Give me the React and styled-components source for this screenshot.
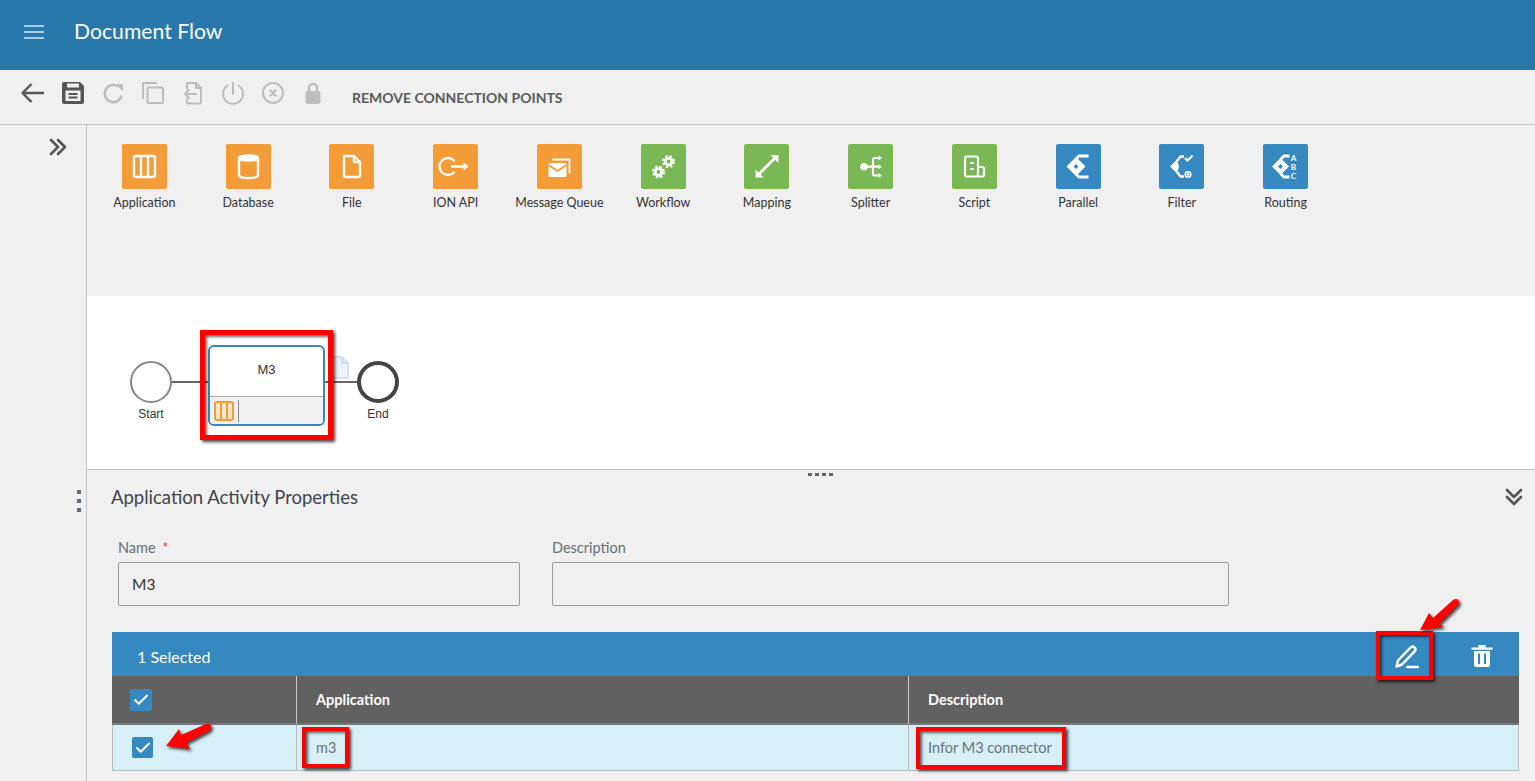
import React from 'react';
import styled, { createGlobalStyle } from 'styled-components';
import { Check } from 'lucide-react';

const GlobalStyle = createGlobalStyle`
  html, body { margin: 0; padding: 0; background: #f0f0f0; }
  body { font-family: Lato, "Noto Sans", sans-serif; color: #444; }
  * { box-sizing: border-box; }
`;

const Shell = styled.div`
  position: relative;
  display: flex;
  flex-direction: column;
  width: 1535px;
  height: 781px;
  overflow: hidden;
  background: #f0f0f0;
`;

const Header = styled.header`
  display: flex;
  align-items: center;
  gap: 28px;
  height: 70px;
  padding: 0 0 8px 23px;
  background: #2878ab;
`;

const MenuIcon = styled.svg`
  width: 23px;
  height: 16px;
  margin-top: 2px;
`;

const Title = styled.h1`
  margin: 0;
  font-size: 21.2px;
  font-weight: 400;
  color: #fff;
`;

const Toolbar = styled.div`
  display: flex;
  align-items: center;
  height: 55px;
  padding-left: 13px;
  border-bottom: 1px solid #c4c4c4;
`;

const ToolButton = styled.span`
  display: flex;
  align-items: center;
  justify-content: center;
  width: 40px;
  height: 40px;
  margin-top: -8px;
  color: ${(p) => (p.$off ? '#bdbdbd' : '#555')};
`;

const ToolText = styled.span`
  margin-left: 19px;
  font-size: 14px;
  font-weight: 700;
  color: #5a5a5a;
`;

const Body = styled.div`
  display: flex;
  flex: 1;
  min-height: 0;
`;

const SideRail = styled.aside`
  display: flex;
  flex-direction: column;
  flex: none;
  width: 87px;
  border-right: 1px solid #c4c4c4;
`;

const RailChevron = styled.svg`
  width: 20px;
  height: 18px;
  margin: 13px 0 0 48px;
`;

const RailDots = styled.div`
  display: flex;
  flex-direction: column;
  gap: 5px;
  margin: 334px 0 0 77px;

  span {
    width: 4px;
    height: 4px;
    background: #5f6b75;
  }
`;

const Main = styled.main`
  display: flex;
  flex-direction: column;
  flex: 1;
  min-width: 0;
`;

const Palette = styled.div`
  display: grid;
  grid-template-columns: repeat(12, 103.75px);
  align-content: start;
  height: 171px;
  padding: 19px 0 0 5.5px;
`;

const PaletteItem = styled.div`
  display: flex;
  flex-direction: column;
  align-items: center;
`;

const PaletteTile = styled.div`
  width: 45px;
  height: 45px;
  border-radius: 2px;
  background: ${(p) => p.$color};

  svg {
    display: block;
    width: 45px;
    height: 45px;
  }
`;

const PaletteLabel = styled.span`
  margin-top: 6px;
  font-size: 12.5px;
  line-height: 16px;
  color: #333;
  white-space: nowrap;
`;

const Canvas = styled.div`
  position: relative;
  flex: none;
  height: 174px;
  background: #fff;
  border-bottom: 1px solid #c0c0c0;
  font-family: "Liberation Sans", Arial, sans-serif;
`;

const Wire = styled.div`
  position: absolute;
  left: 85px;
  top: 85px;
  width: 186px;
  height: 2px;
  background: #666;
`;

const EventCircle = styled.div`
  position: absolute;
  left: ${(p) => p.$x}px;
  top: 65px;
  width: 42px;
  height: 42px;
  border-radius: 50%;
  background: #fff;
  border: ${(p) => (p.$end ? '4px solid #444' : '2px solid #888')};
`;

const EventLabel = styled.span`
  position: absolute;
  left: ${(p) => p.$x}px;
  top: 111px;
  width: 60px;
  text-align: center;
  font-size: 12px;
  line-height: 14px;
  color: #333;
`;

const TaskNode = styled.div`
  position: absolute;
  left: 121px;
  top: 49px;
  display: flex;
  flex-direction: column;
  width: 117px;
  height: 81px;
  border: 2px solid #3688c1;
  border-radius: 6px;
  background: #fff;
  overflow: hidden;
`;

const TaskName = styled.div`
  display: flex;
  align-items: center;
  justify-content: center;
  height: 49px;
  padding-bottom: 4px;
  font-size: 13px;
  color: #333;
`;

const TaskFoot = styled.div`
  display: flex;
  align-items: center;
  flex: 1;
  gap: 4px;
  padding-left: 4px;
  background: #f0f0f0;
  border-top: 1px solid #aaa;
`;

const TaskBadge = styled.span`
  display: flex;
  width: 20px;
  height: 20px;
  padding: 2px;
  gap: 2px;
  border-radius: 3px;
  background: #f39c38;

  i {
    flex: 1;
    background: #fbe6cc;
  }
`;

const TaskRule = styled.span`
  width: 1px;
  height: 22px;
  background: #888;
`;

const DocIcon = styled.svg`
  position: absolute;
  left: 243px;
  top: 60px;
  width: 19px;
  height: 23px;
`;

const Properties = styled.section`
  position: relative;
  flex: 1;
  padding: 15px 16px 0 25px;
`;

const GripDots = styled.div`
  position: absolute;
  left: 721px;
  top: 3px;
  display: flex;
  gap: 3px;

  span {
    width: 4px;
    height: 3px;
    background: #666;
  }
`;

const PropHead = styled.div`
  display: flex;
  align-items: center;
  justify-content: space-between;
  height: 24px;
  margin-left: -1px;
`;

const PropTitle = styled.h2`
  margin: 0;
  font-size: 18.5px;
  font-weight: 400;
  color: #3f444a;
`;

const CollapseIcon = styled.svg`
  width: 18px;
  height: 20px;
  margin-right: -4px;
`;

const FormRow = styled.div`
  display: flex;
  gap: 32px;
  margin: 29px 0 0 6px;
`;

const Field = styled.div`
  width: ${(p) => p.$w}px;
`;

const FieldLabel = styled.div`
  height: 24px;
  font-size: 14.5px;
  line-height: 19px;
  color: #666e75;

  em {
    font-style: normal;
    color: #e8404c;
    margin-left: 3px;
  }
`;

const FieldBox = styled.div`
  display: flex;
  align-items: center;
  height: 44px;
  padding-left: 13px;
  border: 1px solid #9b9b9b;
  border-radius: 2px;
  font-size: 15.5px;
  color: #333;
`;

const Table = styled.div`
  margin-top: 26px;
`;

const SelectedBar = styled.div`
  display: flex;
  align-items: center;
  height: 44px;
  padding: 0 12px 0 25px;
  background: #3688c1;
  color: #fff;
  font-size: 16px;
`;

const SelectedText = styled.span`
  flex: 1;
  margin-top: 5px;
`;

const BarButton = styled.span`
  display: flex;
  align-items: center;
  justify-content: center;
  width: 50px;
  height: 44px;
  margin: 3px 0 0 ${(p) => p.$gap || 0}px;
`;

const TableGrid = styled.div`
  display: grid;
  grid-template-columns: 184px 612px 1fr;
`;

const HeadCell = styled.div`
  display: flex;
  align-items: center;
  height: 49px;
  padding-left: ${(p) => (p.$first ? 18 : 19)}px;
  background: #616161;
  border-left: ${(p) => (p.$first ? 'none' : '1px solid #c8c8c8')};
  border-bottom: 2px solid #777;
  font-size: 14.5px;
  font-weight: 700;
  color: #fff;
`;

const RowCell = styled.div`
  display: flex;
  align-items: center;
  height: 46px;
  padding-left: 19px;
  background: #d7eff7;
  border-left: 1px solid #bbb;
  border-bottom: 1px solid #bbb;
  border-right: ${(p) => (p.$last ? '1px solid #bbb' : 'none')};
  font-size: 14.5px;
  color: #6c7378;
`;

const CheckBox = styled.span`
  display: flex;
  align-items: center;
  justify-content: center;
  width: ${(p) => p.$size}px;
  height: ${(p) => p.$size}px;
  border-radius: 2px;
  background: #3688c1;
  color: #fff;
`;

// callouts drawn over the screenshot
const Callout = styled.div`
  position: absolute;
  left: ${(p) => p.$x}px;
  top: ${(p) => p.$y}px;
  width: ${(p) => p.$w}px;
  height: ${(p) => p.$h}px;
  border: ${(p) => p.$b || 4}px solid #f00;
  box-shadow: 2px 2px 3px rgba(0, 0, 0, 0.75), inset 2px 2px 3px rgba(0, 0, 0, 0.6);
  pointer-events: none;
`;

const CalloutArrow = styled.svg`
  position: absolute;
  left: ${(p) => p.$x}px;
  top: ${(p) => p.$y}px;
  width: 54px;
  height: 44px;
  overflow: visible;
  filter: drop-shadow(2px 2px 1.5px rgba(0, 0, 0, 0.7));
`;

const I = { fill: 'none', stroke: '#fff', strokeWidth: 2.4, strokeLinecap: 'round', strokeLinejoin: 'round' };

const Gear = ({ cx, cy }) => (
  <g>
    <circle cx={cx} cy={cy} r="4.800" fill="#fff" />
    <circle cx={cx} cy={cy} r="5.400" fill="none" stroke="#fff" strokeWidth="2.200" strokeDasharray="2.300 2" />
    <circle cx={cx} cy={cy} r="1.900" fill="#7ab755" />
  </g>
);

// solid diamond with a small hole, used by the routing tiles
const Diamond = ({ cx, r }) => (
  <g>
    <path d={`M${cx} ${22.5 - r}l${r} ${r}-${r} ${r}-${r}-${r}z`} fill="#fff" />
    <path d={`M${cx} 20l2.500 2.500-2.500 2.500-2.500-2.500z`} fill="#3688c1" />
  </g>
);

const glyphs = {
  application: (
    <g {...I}>
      <rect x="12" y="12" width="21" height="21" rx="2" />
      <path d="M19 12v21M26 12v21" />
    </g>
  ),
  database: (
    <g {...I}>
      <path d="M13 14v17c0 2 4.500 3 9.500 3s9.500-1 9.500-3V14" />
      <ellipse cx="22.500" cy="14" rx="9.500" ry="2.600" fill="#fff" />
    </g>
  ),
  file: (
    <g {...I}>
      <path d="M15 12h10l6 6v13a2 2 0 0 1-2 2H17a2 2 0 0 1-2-2z" />
      <path d="M25 12v6h6" />
    </g>
  ),
  ion: (
    <g>
      <path d="M21 16.500a8.500 8.500 0 1 0 0 12" {...I} />
      <path d="M19 22.500h12" {...I} strokeWidth="2.400" />
      <path d="M30.500 18.500l5 4-5 4z" fill="#fff" />
    </g>
  ),
  queue: (
    <g>
      <path d="M16 15.500h16.500v13" {...I} strokeWidth="1.800" />
      <rect x="11.500" y="19" width="18" height="14" rx="1.500" fill="#fff" />
      <path d="M11.500 21l9 6 9-6" fill="none" stroke="#f39c38" strokeWidth="1.800" />
    </g>
  ),
  workflow: (
    <g>
      <Gear cx={17.500} cy={28} />
      <Gear cx={27.500} cy={17.500} />
    </g>
  ),
  mapping: (
    <g>
      <path d="M14 31l17-17" {...I} strokeWidth="2.800" />
      <path d="M26.500 11h8v8z" fill="#fff" />
      <path d="M11.500 25.500v8h8z" fill="#fff" />
    </g>
  ),
  splitter: (
    <g>
      <circle cx="16" cy="22.700" r="3.800" fill="#fff" />
      <path d="M16 22.700h16M32 14h-5a2 2 0 0 0-2 2v13.500a2 2 0 0 0 2 2h5" {...I} strokeWidth="2.200" />
      <path d="M30.500 11.500l3.500 2.500-3.500 2.500zM30.500 20.200l3.500 2.500-3.500 2.500zM30.500 29l3.500 2.500-3.500 2.500z" fill="#fff" />
    </g>
  ),
  script: (
    <g {...I} strokeWidth="2.200">
      <rect x="13" y="12.500" width="13" height="20" rx="2" />
      <path d="M26 23h4a2 2 0 0 1 2 2v5.500a2 2 0 0 1-2 2h-4" />
      <path d="M18 19h4M18 25h4" strokeWidth="2" strokeLinecap="butt" />
    </g>
  ),
  parallel: (
    <g>
      <Diamond cx={20} r={9.500} />
      <path d="M20 15l3-3h9.500M20 30l3 3h9.500" {...I} strokeWidth="2.800" strokeLinecap="butt" strokeLinejoin="miter" />
    </g>
  ),
  filter: (
    <g>
      <path d="M18 15.500l-7 7 7 7 2-7z" fill="#fff" />
      <path d="M18 17l3.500-4.500H25M18 28l3.500 4.500H25" {...I} strokeWidth="2.400" strokeLinecap="butt" />
      <path d="M26 14l2.500 2.500 5-5" {...I} strokeWidth="2.200" strokeLinecap="butt" />
      <circle cx="29" cy="30.500" r="2.800" {...I} strokeWidth="1.600" />
      <path d="M27.500 30.500h3M29 29v3" {...I} strokeWidth="1.200" strokeLinecap="butt" />
    </g>
  ),
  routing: (
    <g>
      <Diamond cx={17.500} r={8.500} />
      <path d="M17.500 15.500l3.500-3.500h5.500M17.500 29.500l3.500 3.500h5.500" {...I} strokeWidth="2.800" strokeLinecap="butt" strokeLinejoin="miter" />
      <text x="30.500" y="16.500" fontSize="8" fontWeight="700" fill="#fff" textAnchor="middle">A</text>
      <text x="30.500" y="25.500" fontSize="8" fontWeight="700" fill="#fff" textAnchor="middle">B</text>
      <text x="30.500" y="34.500" fontSize="8" fontWeight="700" fill="#fff" textAnchor="middle">C</text>
    </g>
  ),
};

const ORANGE = '#f39c38';
const GREEN = '#7ab755';
const BLUE = '#3688c1';

const paletteItems = [
  ['Application', ORANGE, 'application'],
  ['Database', ORANGE, 'database'],
  ['File', ORANGE, 'file'],
  ['ION API', ORANGE, 'ion'],
  ['Message Queue', ORANGE, 'queue'],
  ['Workflow', GREEN, 'workflow'],
  ['Mapping', GREEN, 'mapping'],
  ['Splitter', GREEN, 'splitter'],
  ['Script', GREEN, 'script'],
  ['Parallel', BLUE, 'parallel'],
  ['Filter', BLUE, 'filter'],
  ['Routing', BLUE, 'routing'],
];

const s = { fill: 'none', stroke: 'currentColor', strokeLinecap: 'round', strokeLinejoin: 'round' };

const toolIcons = [
  { off: false, body: <path d="M24 13H3M11.500 4l-9 9 9 9" {...s} strokeWidth="2.400" strokeLinecap="butt" /> },
  {
    off: false,
    body: (
      <g>
        <path d="M4 2h16l4 4v16a2 2 0 0 1-2 2H4a2 2 0 0 1-2-2V4a2 2 0 0 1 2-2z" fill="currentColor" />
        <rect x="7" y="3.500" width="12" height="4" fill="#f0f0f0" />
        <rect x="5.500" y="10.500" width="15" height="10.500" fill="#f0f0f0" />
        <path d="M8.500 14h9M8.500 17.500h9" stroke="currentColor" strokeWidth="2" />
      </g>
    ),
  },
  {
    off: true,
    body: (
      <g>
        <path d="M21.500 15.500A8.500 8.500 0 1 1 18 6.500" {...s} strokeWidth="2.600" strokeLinecap="butt" />
        <path d="M15.500 4H23v7.500z" fill="currentColor" />
      </g>
    ),
  },
  {
    off: true,
    body: (
      <g {...s} strokeWidth="2" strokeLinecap="butt">
        <path d="M17 3H3v16" />
        <rect x="7.500" y="7.500" width="15.500" height="15.500" rx="1" />
      </g>
    ),
  },
  {
    off: true,
    body: (
      <g {...s} strokeWidth="2">
        <path d="M7 9V3h9l5 5v14a1.500 1.500 0 0 1-1.500 1.500h-11A1.500 1.500 0 0 1 7 22v-3" />
        <path d="M16 3v5h5M16 14H5M9 10l-4 4 4 4" />
      </g>
    ),
  },
  {
    off: true,
    body: (
      <g {...s} strokeWidth="2">
        <path d="M7.500 5.500a10 10 0 1 0 11 0" />
        <path d="M13 3v11" />
      </g>
    ),
  },
  {
    off: true,
    body: (
      <g {...s} strokeWidth="2">
        <circle cx="13" cy="13" r="10" />
        <path d="M10.500 10.500l5 5M15.500 10.500l-5 5" strokeWidth="2.400" />
      </g>
    ),
  },
  {
    off: true,
    body: (
      <g>
        <path d="M9 12V8a4 4 0 0 1 8 0v4" {...s} strokeWidth="2.400" />
        <rect x="5.500" y="11" width="15" height="13" rx="2.500" fill="currentColor" />
      </g>
    ),
  },
];

const Chevrons = ({ d }) => (
  <path d={d} fill="none" stroke="#555" strokeWidth="2.600" strokeLinecap="round" strokeLinejoin="round" />
);

const App = () => (
  <Shell>
    <GlobalStyle />
    <Header>
      <MenuIcon viewBox="0 0 23 16">
        <path d="M1 2h20M1 8h20M1 14h20" stroke="#a9cfe6" strokeWidth="2" />
      </MenuIcon>
      <Title>Document Flow</Title>
    </Header>

    <Toolbar>
      {toolIcons.map((t, i) => (
        <ToolButton key={i} $off={t.off}>
          <svg width="26" height="26" viewBox="0 0 26 26">{t.body}</svg>
        </ToolButton>
      ))}
      <ToolText>REMOVE CONNECTION POINTS</ToolText>
    </Toolbar>

    <Body>
      <SideRail>
        <RailChevron viewBox="0 0 20 18">
          <Chevrons d="M3 2l7 7-7 7M10 2l7 7-7 7" />
        </RailChevron>
        <RailDots><span /><span /><span /></RailDots>
      </SideRail>

      <Main>
        <Palette>
          {paletteItems.map(([label, color, glyph]) => (
            <PaletteItem key={label}>
              <PaletteTile $color={color}>
                <svg viewBox="0 0 45 45">{glyphs[glyph]}</svg>
              </PaletteTile>
              <PaletteLabel>{label}</PaletteLabel>
            </PaletteItem>
          ))}
        </Palette>

        <Canvas>
          <Wire />
          <EventCircle $x={43} />
          <EventLabel $x={34}>Start</EventLabel>
          <TaskNode>
            <TaskName>M3</TaskName>
            <TaskFoot>
              <TaskBadge><i /><i /><i /></TaskBadge>
              <TaskRule />
            </TaskFoot>
          </TaskNode>
          <DocIcon viewBox="0 0 19 23">
            <path d="M1 1h11l6 6v15H1z" fill="#eef3fb" stroke="#c5d6ee" strokeWidth="1.400" />
            <path d="M12 1v6h6" fill="#dfe9f7" stroke="#c5d6ee" strokeWidth="1.400" />
          </DocIcon>
          <EventCircle $x={270} $end />
          <EventLabel $x={261}>End</EventLabel>
        </Canvas>

        <Properties>
          <GripDots><span /><span /><span /><span /></GripDots>
          <PropHead>
            <PropTitle>Application Activity Properties</PropTitle>
            <CollapseIcon viewBox="0 0 18 20">
              <Chevrons d="M2 3l7 7 7-7M2 10l7 7 7-7" />
            </CollapseIcon>
          </PropHead>

          <FormRow>
            <Field $w={402}>
              <FieldLabel>Name <em>*</em></FieldLabel>
              <FieldBox>M3</FieldBox>
            </Field>
            <Field $w={677}>
              <FieldLabel>Description</FieldLabel>
              <FieldBox />
            </Field>
          </FormRow>

          <Table>
            <SelectedBar>
              <SelectedText>1 Selected</SelectedText>
              <BarButton>
                <svg width="26" height="26" viewBox="0 0 26 26" fill="none" stroke="#fff" strokeWidth="2.500" strokeLinecap="round" strokeLinejoin="round">
                  <path d="M2.500 23.500l1.500-6L16.500 4.500a2.800 2.800 0 0 1 4 4L8 21.500z" />
                  <path d="M13 24h11" />
                </svg>
              </BarButton>
              <BarButton $gap={25}>
                <svg width="24" height="26" viewBox="0 0 24 26" fill="#fff">
                  <path d="M1.500 4.500h21v2.200h-21zM8.500 2h7v2.600h-7z" />
                  <path d="M4 8h16v14a2 2 0 0 1-2 2H6a2 2 0 0 1-2-2zM8 10.500v10.500h2V10.500zM14 10.500v10.500h2V10.500z" fillRule="evenodd" />
                </svg>
              </BarButton>
            </SelectedBar>
            <TableGrid>
              <HeadCell $first>
                <CheckBox $size={22}><Check size={18} strokeWidth={2.600} /></CheckBox>
              </HeadCell>
              <HeadCell>Application</HeadCell>
              <HeadCell>Description</HeadCell>
              <RowCell>
                <CheckBox $size={21}><Check size={18} strokeWidth={2.600} /></CheckBox>
              </RowCell>
              <RowCell>m3</RowCell>
              <RowCell $last>Infor M3 connector</RowCell>
            </TableGrid>
          </Table>
        </Properties>
      </Main>
    </Body>

    <Callout $x={200} $y={330} $w={133} $h={110} $b={5} />
    <Callout $x={1376} $y={631} $w={57} $h={49} />
    <Callout $x={302} $y={727} $w={47} $h={41} />
    <Callout $x={916} $y={727} $w={150} $h={42} />
    <CalloutArrow $x={1414} $y={594} viewBox="0 0 54 44">
      <path d="M6 36l9-17 4 5 20-18c4-3 8 1 5 5L25 30l5 3z" fill="#f00" />
    </CalloutArrow>
    <CalloutArrow $x={162} $y={716} viewBox="0 0 54 44">
      <path d="M4 30l13-17 2 6 25-11c5-2 7 4 3 7L24 27l4 6z" fill="#f00" />
    </CalloutArrow>
  </Shell>
);

export default App;
